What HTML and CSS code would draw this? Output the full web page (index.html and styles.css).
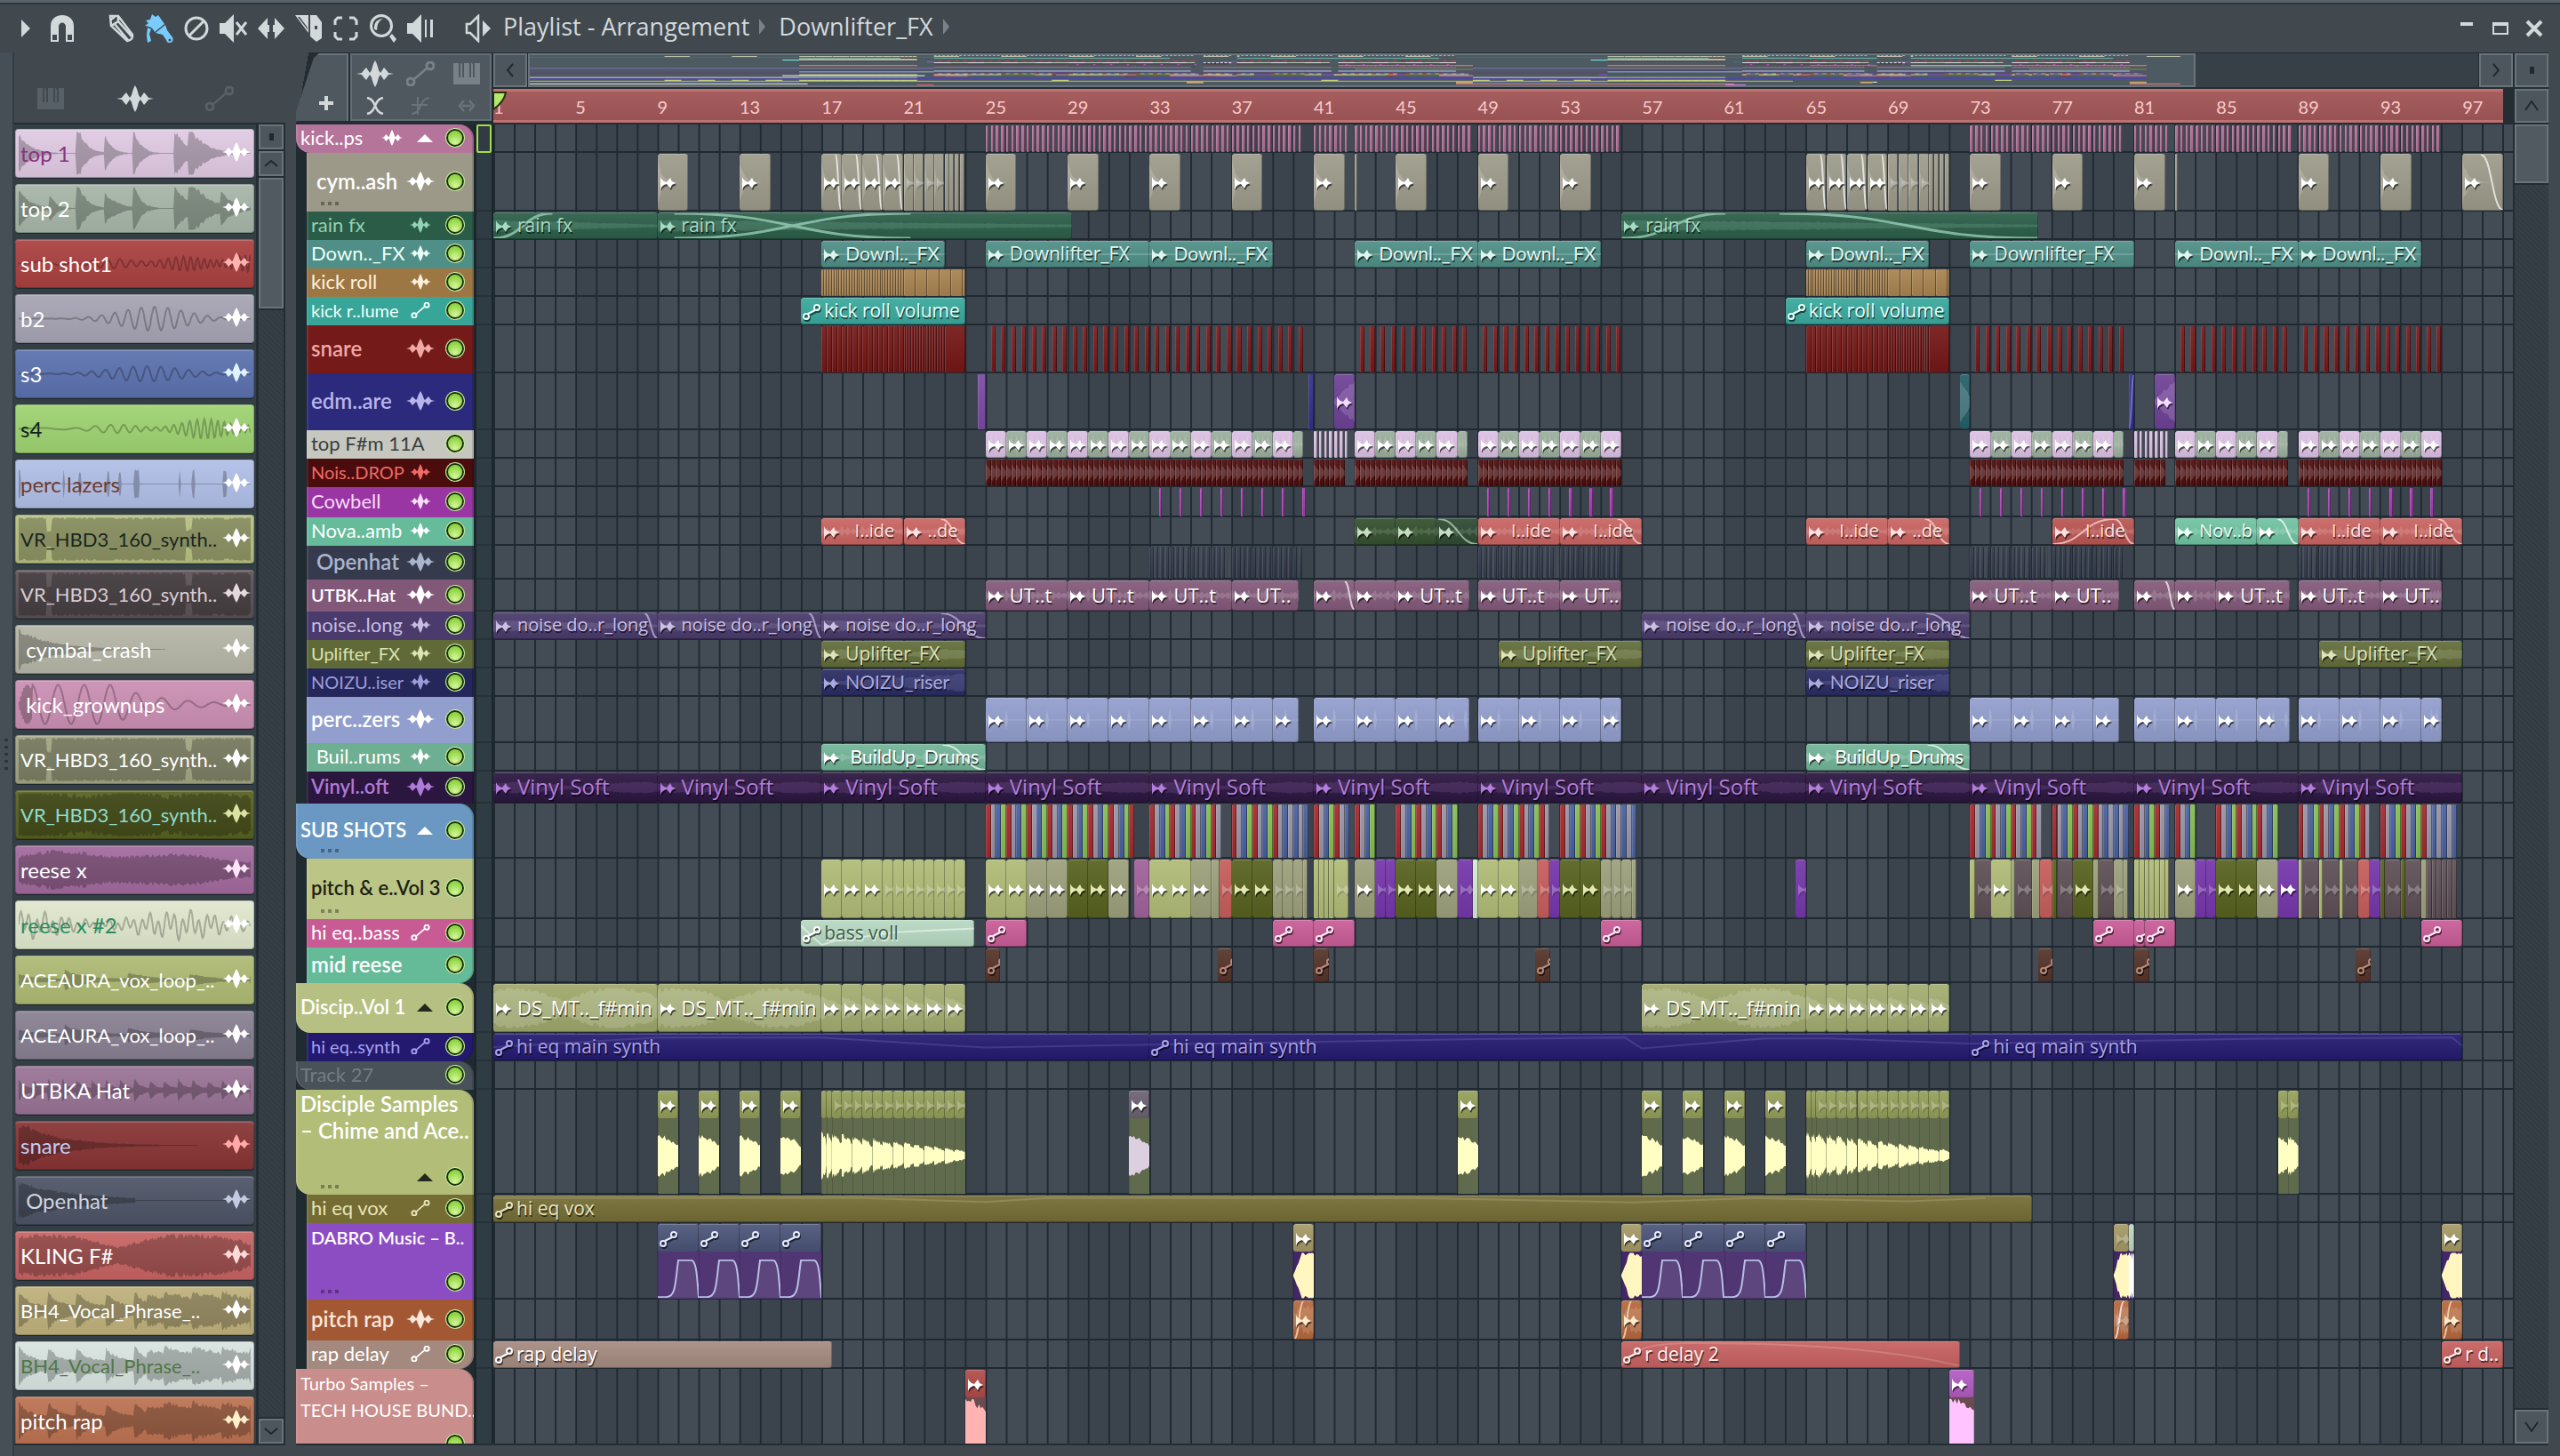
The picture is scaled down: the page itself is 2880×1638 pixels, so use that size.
FILE: index.html
```html
<!DOCTYPE html>
<html lang="en">
<head>
<meta charset="utf-8">
<title>Playlist - Arrangement</title>
<link rel="stylesheet" href="styles.css">
</head>
<body>
<svg class="defs" aria-hidden="true">
  <symbol id="i-wave" viewBox="0 0 42 30"><path d="M21 0C23 3 24 7 25 11L27 14L31 8Q34 11 36 14L42 15L36 16Q34 19 31 22L27 16L25 19C24 23 23 27 21 30C19 27 18 23 17 19L15 16L11 22Q8 19 6 16L0 15L6 14Q8 11 11 8L15 14L17 11C18 7 19 3 21 0Z"/></symbol>
  <symbol id="i-wave-s" viewBox="0 0 32 22"><path d="M16 0C18 3 19 6 20 9L21 10L25 6L28 10L32 11L28 12L25 16L21 12L20 13C19 16 18 19 16 22C14 19 13 16 12 13L11 12L7 16L4 12L0 11L4 10L7 6L11 10L12 9C13 6 14 3 16 0Z"/></symbol>
  <symbol id="i-auto" viewBox="0 0 32 28"><g fill="none" stroke="currentColor" stroke-width="3"><circle cx="5" cy="23" r="4"/><circle cx="27" cy="5" r="4"/><path d="M9 20L23 8" stroke-width="2.5"/></g></symbol>
  <symbol id="i-piano" viewBox="0 0 30 24"><path d="M0 0H6V16H8V0H9L10 2V16H12V0H18V16H20V0H21L22 2V16H24V0H30V24H0Z"/></symbol>
  <symbol id="i-clip" viewBox="0 0 17 14"><path d="M0 0Q2 5 7 6L11 1L13 5L17 7L13 9L11 13L7 8Q2 9 0 14Z"/></symbol>
  <symbol id="i-node" viewBox="0 0 20 18"><g fill="none" stroke="currentColor" stroke-width="2"><circle cx="4" cy="14" r="3"/><circle cx="16" cy="4" r="3"/><path d="M6 11L14 7"/></g></symbol>
</svg>

<header class="titlebar">
  <button class="tool menu" aria-label="Menu"><svg width="10" height="20" viewBox="0 0 10 20"><path d="M0 0L10 10L0 20Z"/></svg></button>
  <button class="tool magnet" aria-label="Snap"><svg width="26" height="30" viewBox="0 0 26 30"><path d="M0 30V12C0-4 26-4 26 12V30H17V13C17 7 9 7 9 13V30Z"/><path class="cut" d="M2 22H7V28H2ZM19 22H24V28H19Z"/></svg></button>
  <div class="tools" role="toolbar" aria-label="Edit tools">
    <button class="tool" aria-label="Draw"><svg width="30" height="32" viewBox="0 0 30 32"><path fill="none" stroke="currentColor" stroke-width="2.5" d="M2 2L11 2L27 23Q28 29 21 30L3 13ZM3 13L11 8V2M11 8L26 25M7 11L22 29M3 6L7 3"/></svg></button>
    <button class="tool on" aria-label="Paint"><svg width="32" height="32" viewBox="0 0 32 32"><path d="M8 0L12 3L15 1L22 11L11 20Q9 14 0 13L4 10L1 7L6 6ZM12 21L23 12L25 18L31 26Q33 30 29 32Q25 33 24 29L20 23ZM3 15L7 17L5 22L7 30L3 32L2 24Z"/><circle class="cut" cx="28" cy="29" r="1.5"/></svg></button>
    <button class="tool" aria-label="Delete"><svg width="28" height="30" viewBox="0 0 28 30"><g fill="none" stroke="currentColor" stroke-width="3"><circle cx="14" cy="15" r="12"/><path d="M6 23L22 7"/></g></svg></button>
    <button class="tool" aria-label="Mute"><svg width="32" height="32" viewBox="0 0 32 32"><path d="M0 10H6L16 0V32L6 22H0Z"/><path fill="none" stroke="currentColor" stroke-width="3" d="M19 9L30 23M30 9L19 23"/></svg></button>
    <button class="tool" aria-label="Slip"><svg width="30" height="26" viewBox="0 0 30 26"><path d="M0 13L11 1V9H13V17H11V25ZM30 13L19 1V9H17V17H19V25Z"/></svg></button>
    <button class="tool" aria-label="Slice"><svg width="30" height="30" viewBox="0 0 30 30"><path d="M0 0H15V20ZM17 0H24L30 8V26L24 30L17 24Z"/><path class="cut" d="M3 2L14 16V14L5 2ZM22 12H25V16H22Z"/></svg></button>
    <button class="tool" aria-label="Select"><svg width="28" height="28" viewBox="0 0 28 28"><path fill="none" stroke="currentColor" stroke-width="3" d="M2 10V5L5 2H10M18 2H23L26 5V10M26 18V23L23 26H18M10 26H5L2 23V18"/></svg></button>
    <button class="tool" aria-label="Zoom"><svg width="30" height="32" viewBox="0 0 30 32"><circle cx="13" cy="13" r="11.5" fill="none" stroke="currentColor" stroke-width="3"/><path d="M5 17Q4 6 15 5Q8 8 8 18ZM22 25L25 22L30 28L27 32Z"/></svg></button>
    <button class="tool" aria-label="Playback"><svg width="30" height="32" viewBox="0 0 30 32"><path d="M0 10H6L16 0V32L6 22H0ZM20 6H22V26H20ZM26 6H29V26H26Z"/></svg></button>
  </div>
  <button class="tool speaker" aria-label="Playlist options"><svg width="30" height="32" viewBox="0 0 30 32"><path fill="none" stroke="currentColor" stroke-width="2.5" d="M2 11H6L15 2V30L6 21H2Z"/><path d="M20 7L29 16L20 25Z"/></svg></button>
  <nav class="crumbs"><button>Playlist - Arrangement</button><i></i><button>Downlifter_FX</button><i></i></nav>
  <div class="window-buttons">
    <button aria-label="Minimize"><svg width="22" height="26" viewBox="0 0 22 26"><path d="M4 6H18V10H4Z"/></svg></button>
    <button aria-label="Maximize"><svg width="22" height="26" viewBox="0 0 22 26"><path fill-rule="evenodd" d="M2 6H20V20H2ZM4 10H18V18H4Z"/></svg></button>
    <button aria-label="Close"><svg width="22" height="26" viewBox="0 0 22 26"><path fill="none" stroke="currentColor" stroke-width="4" d="M3 5L19 21M19 5L3 21"/></svg></button>
  </div>
</header>

<main class="main">
  <div class="grip"><i></i><i></i><i></i><i></i><i></i></div>
  <aside class="picker">
    <div class="picker-tabs">
      <button class="dim" aria-label="Patterns"><svg width="30" height="24"><use href="#i-piano"/></svg></button>
      <button aria-label="Audio clips"><svg width="42" height="30"><use href="#i-wave"/></svg></button>
      <button class="dim" aria-label="Automation clips"><svg width="32" height="28"><use href="#i-auto"/></svg></button>
    </div>
    <div class="picker-body">
      <div class="picker-list" id="picker"></div>
      <div class="scroll">
        <button aria-label="Options"><b></b></button>
        <button aria-label="Scroll up"><svg width="16" height="8" viewBox="0 0 16 8"><path d="M1 7L8 1L15 7"/></svg></button>
        <div class="thumb long"></div>
        <div class="track"></div>
        <button aria-label="Scroll down"><svg width="16" height="8" viewBox="0 0 16 8"><path d="M1 1L8 7L15 1"/></svg></button>
      </div>
    </div>
  </aside>

  <section class="playlist">
    <div class="panel">
      <button class="plus" aria-label="Add track"><span></span></button>
      <div class="modes">
        <button aria-label="Audio"><svg width="42" height="30"><use href="#i-wave"/></svg></button>
        <button class="dim" aria-label="Automation"><svg width="32" height="28"><use href="#i-auto"/></svg></button>
        <button class="dim" aria-label="Patterns"><svg width="30" height="24"><use href="#i-piano"/></svg></button>
        <button aria-label="Crossfade"><svg width="20" height="20" viewBox="0 0 20 20"><path fill="none" stroke="currentColor" stroke-width="2.5" d="M1 1C12 3 8 17 19 19M19 1C8 3 12 17 1 19"/></svg></button>
        <button class="dim" aria-label="Curve"><svg width="20" height="20" viewBox="0 0 20 20"><path fill="none" stroke="currentColor" stroke-width="2" d="M0 9H18M7 0V20M0 19C12 19 8 2 20 1"/></svg></button>
        <button class="dim" aria-label="Stretch"><svg width="20" height="14" viewBox="0 0 20 14"><path fill="none" stroke="currentColor" stroke-width="2.5" d="M7 1L2 7L7 13M13 1L18 7L13 13M5 7H15"/></svg></button>
      </div>
    </div>
    <div class="timeline">
      <div class="overview">
        <button class="square" aria-label="Scroll left"><svg width="8" height="16" viewBox="0 0 8 16"><path d="M7 1L1 8L7 15"/></svg></button>
        <div class="overview-track"><div class="overview-view" id="overview"></div></div>
        <button class="square" aria-label="Scroll right"><svg width="8" height="16" viewBox="0 0 8 16"><path d="M1 1L7 8L1 15"/></svg></button>
      </div>
      <div class="ruler-row"><div class="ruler" id="ruler"><svg class="marker" width="16" height="22" viewBox="0 0 16 22"><path d="M0 1H14Q12 12 0 20Z"/></svg></div></div>
    </div>
    <div class="corner scroll">
      <button class="tall" aria-label="Options"><b></b></button>
      <button class="tall" aria-label="Scroll up"><svg width="16" height="12" viewBox="0 0 16 12"><path d="M1 11L8 1L15 11"/></svg></button>
    </div>
    <div class="heads" id="heads"></div>
    <div class="meters" id="meters"></div>
    <div class="lanes" id="lanes"></div>
    <div class="scroll">
      <div class="thumb short"></div>
      <div class="track"></div>
      <button class="tall" aria-label="Scroll down"><svg width="16" height="12" viewBox="0 0 16 12"><path d="M1 1L8 11L15 1"/></svg></button>
    </div>
  </section>
</main>
<script src="app.js"></script>
</body>
</html>
```
FILE: styles.css
```css
* { box-sizing: border-box; }
html, body { height: 100%; }
body {
  margin: 0;
  display: flex;
  flex-direction: column;
  overflow: hidden;
  background: #41494f;
  color: #d3d8db;
  font: 22px/28px Lato, "Open Sans", sans-serif;
}
button {
  display: flex;
  align-items: center;
  justify-content: center;
  padding: 0;
  border: 0;
  background: none;
  color: inherit;
  font: inherit;
}
svg { display: block; flex: none; fill: currentColor; }
.defs { position: absolute; width: 0; height: 0; }

/* title bar */
.titlebar {
  display: flex;
  align-items: center;
  height: 59px;
  flex: none;
  padding: 2px 10px 0 22px;
  border-top: 3px solid #59636a;
  box-shadow: inset 0 2px #2c363c;
}
.tool { height: 42px; width: 42px; }
.tool.menu { width: 14px; }
.tool.magnet { margin-left: 13px; }
.tool.on { color: #7accff; }
.tools { display: flex; margin-left: 25px; }
.tool.speaker { margin: 0 7px 0 23px; }
.cut { fill: #41494f; }
.crumbs { display: flex; align-items: center; font-family: "Open Sans", sans-serif; font-size: 27px; gap: 11px; flex: 1; padding-bottom: 4px; }
.crumbs i { border: 9px solid transparent; border-left: 7px solid #79828a; border-right-width: 0; margin-right: 4px; }
.window-buttons { display: flex; gap: 16px; margin-right: 8px; }

/* frame */
.main { flex: 1; min-height: 0; display: flex; padding: 0 13px 12px 0; }
.grip {
  width: 16px;
  flex: none;
  margin-bottom: -12px;
  background: #464f56;
  border-right: 2px solid #333c43;
  display: flex;
  flex-direction: column;
  justify-content: center;
  align-items: center;
  gap: 5px;
}
.grip i { width: 4px; height: 3px; background: #2c353b; }

/* clip picker */
.picker { width: 305px; flex: none; display: flex; flex-direction: column; margin-right: 12px; }
.picker-tabs { display: flex; height: 79px; padding: 24px 58px 0 26px; justify-content: space-between; align-items: center; }
.dim { color: #566066; }
.picker-body { flex: 1; min-height: 0; display: flex; background: #333e45; border: solid #232d33; border-width: 2px 2px 2px 0; }
.picker-list { flex: 1; overflow: hidden; padding: 5px 2px 0 1px; display: flex; flex-direction: column; gap: 7px; border-right: 3px solid #232d33; }
.sample {
  position: relative;
  flex: none;
  height: 55px;
  padding: 0 4px 0 6px;
  justify-content: space-between;
  border-radius: 4px;
  background: linear-gradient(#ffffff14, #00000010) var(--c);
  box-shadow: inset 0 0 0 1px #0003, inset 0 2px #fff3, 0 1px #1c252b;
  color: var(--t);
  font-size: 24px;
  white-space: pre;
}
.sample.long { font-size: 22px; }
.sample span { position: relative; }
.sample > svg:last-child { position: relative; color: var(--i); margin-top: -4px; }
.sample .wave { position: absolute; left: 4px; top: 3px; width: calc(100% - 8px); height: 49px; color: #000; opacity: .24; }

/* scroll bars */
.scroll { display: flex; flex-direction: column; gap: 2px; width: 28px; background: #232d33; }
.scroll button, .square {
  height: 28px;
  background: #4d565d;
  border: 2px solid #69737a;
  color: #1f292f;
}
.scroll button svg, .square svg { fill: none; stroke: currentColor; stroke-width: 2; }
.scroll .tall { height: 38px; }
.scroll b { width: 5px; height: 8px; background: #1f292f; }
.thumb { background: #515a61; border: 2px solid #69737a; }
.thumb.long { height: 147px; }
.thumb.short { height: 66px; }
.track { flex: 1; background: repeating-linear-gradient(45deg, #363f46 0 2px, #323b41 2px 4px); }

/* playlist */
.playlist {
  flex: 1;
  min-width: 0;
  display: grid;
  grid-template-columns: 200px 22px minmax(0, 1fr) 40px;
  grid-template-rows: 81px minmax(0, 1fr);
  border-bottom: 2px solid #232d33;
}
.panel { grid-column: 1 / 3; display: flex; gap: 2px; padding: 1px 2px 2px 0; background: linear-gradient(100deg, #41494f 14px, #232d33 14px); border-bottom: 2px solid #232d33; }
.plus { width: 59px; padding: 36px 0 0 8px; background: #4f585f; clip-path: polygon(20px 5px, 26px 0, 100% 0, 100% 100%, 0 100%, 0 86%); box-shadow: inset -2px 2px #69737a; }
.plus span { width: 16px; height: 16px; background: linear-gradient(currentColor, currentColor) center / 100% 4px no-repeat, linear-gradient(currentColor, currentColor) center / 4px 100% no-repeat; }
.modes { flex: 1; display: grid; grid-template-columns: repeat(3, 1fr); background: #4f585f; border: 2px solid #636d74; }
.modes .dim { color: #788187; }
.modes .dim:nth-child(n+5) { color: #69737a; }

.timeline { display: flex; flex-direction: column; min-width: 0; background: #232d33; }
.overview { display: flex; height: 41px; padding: 1px 0 2px; gap: 1px; }
.square { width: 38px; height: 38px; flex: none; }
.overview-track { flex: 1; background: #373f47; }
.overview-view { width: 85.5%; height: 38px; background: #4d5a61; border: 2px solid #69737a; }
.overview-view svg { width: 100%; height: 34px; filter: brightness(1.3); }
.ruler-row { flex: 1; padding-bottom: 2px; }
.ruler {
  position: relative;
  width: calc(100% * 98 / 98.46);
  height: 38px;
  background: linear-gradient(#a55d5e, #995253);
  border: solid #bf7270;
  border-width: 3px 0;
  color: #f9caca;
  font-size: 20px;
  line-height: 34px;
}
.ruler span { position: absolute; }
.marker { position: absolute; left: 0; top: 0; z-index: 1; fill: #b4e86a; stroke: #24330f; stroke-width: 2; }
.corner { padding: 1px 0 2px 2px; }
.playlist > .scroll { width: 40px; padding-left: 2px; border-right: 0; }

/* track headers */
.heads { overflow: hidden; background: #1f2a31; }
.head {
  position: relative;
  display: flex;
  height: var(--h);
  margin-left: 12px;
  padding: 0 10px 2px 5px;
  align-items: center;
  background: var(--c);
  box-shadow: inset 2px 0 #ffffff18, inset -2px 0 #0002;
  color: var(--t);
  white-space: pre;
}
.head.group { margin-left: 0; border-radius: 0 16px 0 16px; }
.head.last { border-radius: 0 0 16px 0; }
.head.big { font-size: 24px; font-weight: 600; }
.head.mid { font-size: 22px; font-weight: 600; }
.head.bold { font-size: 20px; font-weight: 600; }
.head.small { font-size: 20px; }
.head .name { flex: 1; min-width: 0; }
.head .ico { width: 32px; display: flex; justify-content: center; margin-right: 12px; }
.head .up { border: 9px solid transparent; border-top: 0; border-bottom-color: currentColor; margin-right: 14px; }
.head.tall { align-items: flex-end; justify-content: flex-end; padding-bottom: 9px; }
.head.tall .name { position: absolute; top: 1px; left: 5px; line-height: 30px; }
.head.tall .up { margin-bottom: 6px; }
.head .dark { border-bottom-color: #23291a; }
.dots { position: absolute; left: 16px; bottom: 7px; width: 20px; height: 4px; background: repeating-linear-gradient(90deg, #0005 0 4px, transparent 4px 8px); }
.group .dots { left: 28px; }
.led {
  appearance: none;
  width: 22px;
  height: 22px;
  margin: 0;
  flex: none;
  border-radius: 50%;
  border: 1px solid #ffffff70;
  background: radial-gradient(circle at 50% 75%, #d6f59a, #8fd544 60%);
  box-shadow: inset 0 0 0 2px #1c3012;
}
.meters { overflow: hidden; background: #2f3c43; border: solid #1c272d; border-width: 0 2px 0 3px; }
.meters i { display: block; height: var(--h); border-bottom: 2px solid #263138; }
.meters i:first-child { border: 2px solid #a8dc4a; border-radius: 2px; }

/* arrangement */
.lanes {
  position: relative;
  overflow: hidden;
  background:
    linear-gradient(90deg, #1f2932 2px, transparent 2px) 0 0 / calc(100% / 98.46) 100%,
    linear-gradient(90deg, #434b55 50%, #3b444d 50%) 0 0 / calc(100% * 8 / 98.46) 100%;
}
.lane { position: relative; height: var(--h); border-bottom: 2px solid #1f2932; }
.clip {
  position: absolute;
  top: 1px;
  bottom: -1px;
  overflow: hidden;
  display: flex;
  align-items: center;
  border-radius: 3px;
  background: linear-gradient(#ffffff12, #00000014) var(--c);
  box-shadow: inset -1px 0 #0004, inset 0 1px #fff3, inset 0 -1px #0004;
  color: var(--t, #fff);
  font: 21px/26px "Open Sans", sans-serif;
  white-space: pre;
}
.clip.tight { font: 21px/26px Lato, sans-serif; }
.clip.snug { font-size: 20px; }
.clip.mid { font-size: 22px; }
.clip.large { font-size: 24px; }
.clip.thin { border-radius: 1px; box-shadow: inset 1px 0 #fff2, inset -1px 0 #0006; }
.clip.dull { opacity: .75; }
.clip .icon { position: relative; margin: 2px 7px 0 3px; filter: drop-shadow(1px 2px #0009); }
.clip .icon.node { margin: 2px 4px 0 2px; }
.clip .faint { opacity: .25; }
.clip span { position: relative; text-shadow: 1px 2px #0009; margin-top: -3px; }
.clip.pale span { text-shadow: 1px 2px #fff9; }
.clip .wave, .clip .curve { position: absolute; left: 0; top: 4px; width: 100%; height: calc(100% - 8px); }
.clip .wave { opacity: .16; color: var(--t, #fff); }
.clip .curve { fill: none; stroke: var(--t, #fff); stroke-width: 2; opacity: .7; top: 1px; height: calc(100% - 2px); }
.clip.auto .curve { opacity: .18; }
.clip.pale .curve { stroke: #fff; opacity: .5; }
.clip.pale .icon { color: #fff; }
.clip.wide .curve { stroke-width: 3; }
.clip.faintline .curve { stroke-width: 1; opacity: .4; }
.clip.split { display: block; background: var(--b); box-shadow: inset 1px 0 #0002; border-radius: 0; }
.clip.split .cap { display: flex; align-items: center; height: 31px; border-radius: 3px; background: linear-gradient(#ffffff14, #00000018) var(--c); box-shadow: inset -1px 0 #0004, inset 0 1px #fff3; overflow: hidden; }
.clip.split .wave { top: 32px; height: calc(100% - 32px); color: var(--w); opacity: 1; }
.clip.split .curve { top: 40px; height: calc(100% - 41px); stroke: #b7bfe6; fill: #ffffff14; opacity: 1; }
```
FILE: app.js
```js
const NS = 'http://www.w3.org/2000/svg';
const BARS = 98.46;

function el(tag, cls, parent) {
  const e = document.createElement(tag);
  if (cls) e.className = cls;
  if (parent) parent.appendChild(e);
  return e;
}
function svg(markup, cls, box, parent) {
  const s = document.createElementNS(NS, 'svg');
  s.setAttribute('class', cls);
  s.setAttribute('viewBox', box);
  s.setAttribute('preserveAspectRatio', 'none');
  s.innerHTML = markup;
  parent.appendChild(s);
  return s;
}
function icon(id, w, h, cls, parent) {
  const s = document.createElementNS(NS, 'svg');
  s.setAttribute('width', w);
  s.setAttribute('height', h);
  if (cls) s.setAttribute('class', cls);
  s.innerHTML = `<use href="#${id}"/>`;
  parent.appendChild(s);
}
let seed = 7;
const rnd = () => (seed = (seed * 16807) % 2147483647) / 2147483647;

/* waveform shapes: t runs 0..1, result is the amplitude */
const hits = (list, t) => Math.max(.02, ...list.map(([p, d, a]) => t < p ? 0 : a * Math.exp(-(t - p) / d)));
const env = {
  beat: t => hits([[0, .05, 1], [.25, .035, 1.6], [.37, .03, 1], [.49, .03, 1.5], [.67, .05, 1.3], [.73, .06, 1.6]], t),
  beat2: t => hits([[0, .05, 1], [.13, .03, .8], [.25, .035, 1.6], [.37, .05, .9], [.49, .03, 1.5], [.67, .05, 1.3], [.73, .07, 1.8], [.87, .06, .9]], t),
  perc: t => [[0, .01], [.19, .01], [.26, .01], [.38, .01], [.43, .01], [.5, .02], [.69, .01], [.75, .01], [.88, .02]].some(([p, w]) => t >= p && t < p + w) ? .7 : .02,
  flat: t => 1.1 + .15 * Math.sin(t * 17),
  burst: t => 1 - .45 * t * t,
  flatcut: t => t > .12 && t < .14 ? .4 : t > .72 && t < .75 ? .5 : 1.2,
  crash: t => Math.exp(-t * 7),
  snare: t => t < .05 ? 1 : Math.exp(-(t - .03) * 6),
  hat: t => t > .5 ? .02 : Math.exp(-t * 4) * .9,
  reese: t => .7 + .3 * Math.sin(t * 8) * Math.cos(t * 3),
  swell: t => .4 + .7 * Math.abs(Math.sin(t * 5 + 1)),
  pulses: t => .1 + .5 * Math.exp(-((t * 16) % 1) * 3),
  loop: t => .06 + .5 * Math.exp(-((t * 6 + .4) % 1.6) * 2) * (1 - t * .6),
  vocal: t => .25 + .75 * Math.exp(-((t * 8) % 1) * (t > .55 ? .6 : 3)),
  rise: t => .1 + .9 * t,
  flare: t => Math.min(1.1, .05 + t * 2.6),
  fall: t => 1 - .75 * t,
  block: t => 1.2 - .5 * t,
  low: t => .35 + .2 * Math.sin(t * 9),
  soft: t => .5 * (1 - t) + .15
};
function wavePath(kind, n) {
  let up = '', down = '';
  for (let i = 0; i <= n; i++) {
    const t = i / n;
    const a = Math.min(1, env[kind](t) * (.75 + .25 * rnd())) * 49;
    up += `L${(t * 100).toFixed(1)} ${(50 - a).toFixed(0)}`;
    down = `L${(t * 100).toFixed(1)} ${(50 + a).toFixed(0)}` + down;
  }
  return `<path d="M0 50${up}${down}Z"/>`;
}
const lines = {
  sub: t => Math.sin(t * t * 140) * (.08 + .35 * t) * (.7 + .3 * Math.sin(t * 20)),
  b2: t => Math.sin(t * 110) * .55 * Math.exp(-Math.pow((t - .58) * 5, 2)),
  s3: t => Math.sin(t * 105) * .35 * Math.exp(-Math.pow((t - .55) * 4.5, 2)),
  s4: t => Math.sin(t * t * 130) * (.05 + .5 * Math.pow(t, 1.5)) * (.7 + .4 * Math.cos(t * 16)),
  kick: t => t < .06 ? Math.sin(t * 900) * .9 : Math.cos((t - .17) * 56) * .9 * Math.min(1, Math.exp(-(t - .4) * 5)),
  saw: t => (Math.sin(t * 180) * .5 + Math.sin(t * 70) * .3) * (.6 + .3 * Math.cos(t * 9))
};
function linePath(kind) {
  let d = '';
  for (let i = 0; i <= 300; i++) {
    const t = i / 300;
    d += `${i ? 'L' : 'M'}${(t * 100).toFixed(1)} ${(50 - lines[kind](t) * 50).toFixed(1)}`;
  }
  return `<path d="${d}" fill="none" stroke="currentColor" stroke-width="2" vector-effect="non-scaling-stroke"/>`;
}

/* ---- clip picker ---- */
const samples = [
  ['top 1', '#dfc9e2', '#86347e', '#fff', 'beat'], ['top 2', '#a5b5a6', '#fff', '#fff', 'beat2'],
  ['sub shot1', '#a93f3f', '#fff', '#ffb4b0', 'sub'], ['b2', '#a5a3b2', '#fff', '#fff', 'b2'],
  ['s3', '#5a70ad', '#fff', '#dff4ff', 's3'], ['s4', '#9dd270', '#10221c', '#fff', 's4'],
  ['perc lazers', '#b0bee6', '#703c30', '#fff', 'perc'], ['VR_HBD3_160_synth..', '#b6bf80', '#1a2620', '#fff', 'flatcut'],
  ['VR_HBD3_160_synth..', '#5b5155', '#d8ccd2', '#e4dade', 'flatcut'], [' cymbal_crash', '#b4b5a5', '#fff', '#fff', 'crash'],
  [' kick_grownups', '#ca8eb2', '#fff', '#fff', 'kick'], ['VR_HBD3_160_synth..', '#a0a581', '#fff', '#fff', 'flatcut'],
  ['VR_HBD3_160_synth..', '#56601f', '#8fdccc', '#dce2a4', 'flat'], ['reese x', '#a1699c', '#fff', '#ffe4fc', 'reese'],
  ['reese x #2', '#dfe7cc', '#2c8c60', '#fff', 'saw'], ['ACEAURA_vox_loop_..', '#adb973', '#fff', '#fff', 'loop'],
  ['ACEAURA_vox_loop_..', '#877f90', '#fff', '#fff', 'loop'], ['UTBKA Hat', '#987294', '#fff', '#fff', 'pulses'],
  ['snare', '#873333', '#c4ccf4', '#ffaaaa', 'snare'], [' Openhat', '#4c5365', '#cfd4e0', '#c2cbe2', 'hat'],
  ['KLING F#', '#c66262', '#fff', '#ffd8d8', 'swell'], ['BH4_Vocal_Phrase_..', '#beb07b', '#fff', '#fff', 'vocal'],
  ['BH4_Vocal_Phrase_..', '#d8e3df', '#4e7846', '#fff', 'vocal'], ['pitch rap', '#bb7150', '#fff', '#fff0cc', 'vocal']
];
const picker = document.getElementById('picker');
samples.forEach(([name, c, t, i, w]) => {
  const b = el('button', 'sample' + (name.length > 16 ? ' long' : ''), picker);
  b.style.cssText = `--c:${c};--t:${t};--i:${i}`;
  svg(lines[w] ? linePath(w) : wavePath(w, 180), 'wave', '0 0 100 100', b);
  el('span', '', b).textContent = name;
  icon('i-wave-s', 32, 22, '', b);
});

/* ---- tracks: name, height, colour, text, icon, flags ---- */
const tracks = [
  ['kick..ps', 32, '#b5749a', '#fff', 'w', 'group up'], [' cym..ash', 66, '#9c9989', '#fff', 'W', 'big dots'],
  ['rain fx', 32, '#2a5c47', '#94d2b4', 'w', ''], ['Down.._FX', 32, '#4f8f87', '#e8fff8', 'w', ''],
  ['kick roll', 32, '#9d7743', '#fff0dc', 'w', ''], ['kick r..lume', 32, '#37a598', '#f0fffc', 'a', 'small'],
  ['snare', 54, '#741b1a', '#f0a8a4', 'W', 'big'], ['edm..are', 64, '#2b2a7c', '#b8b4ea', 'W', 'big'],
  ['top F#m 11A', 32, '#c6c7bf', '#3a3e3e', '', ''], ['Nois..DROP', 32, '#4a0c0c', '#f06a66', 'w', 'small'],
  ['Cowbell', 34, '#9a35a4', '#f8dcfa', 'w', ''], ['Nova..amb', 32, '#66bb9a', '#fff', 'w', ''],
  [' Openhat', 38, '#353b4c', '#aab4cc', 'W', 'big'], ['UTBK..Hat', 36, '#825878', '#fff', 'W', 'bold'],
  ['noise..long', 32, '#4a3b6c', '#c8bce2', 'w', ''], ['Uplifter_FX', 32, '#5f6a38', '#dce2b0', 'w', 'small'],
  ['NOIZU..iser', 32, '#25265a', '#9c9cd8', 'w', 'small'], ['perc..zers', 52, '#929ecd', '#fff', 'W', 'big'],
  [' Buil..rums', 32, '#6eae93', '#fff', 'w', ''], ['Vinyl..oft', 36, '#2a163e', '#b07ad8', 'W', 'mid'],
  ['SUB SHOTS', 62, '#6b98c2', '#fff', '', 'group up dots mid'], ['pitch & e..Vol 3', 68, '#bac586', '#1c2010', '', 'dots mid'],
  ['hi eq..bass', 32, '#c85a94', '#fff', 'a', ''], ['mid reese', 40, '#65ba98', '#fff', '', 'last big'],
  ['Discip..Vol 1', 56, '#b7c083', '#fff', '', 'group up dark mid'], ['hi eq..synth', 32, '#231a70', '#a8a0ee', 'a', 'last small'],
  ['Track 27', 32, '#4a5259', '#737c83', '', 'group'], ['Disciple Samples\n– Chime and Ace..', 118, '#b2bd78', '#fff', '', 'group up dark dots big tall'],
  ['hi eq vox', 32, '#746c33', '#e8e4b8', 'a', ''], ['DABRO Music – B..', 86, '#8c4cc2', '#fff', '', 'dots bold tall'],
  ['pitch rap', 46, '#a35833', '#f8e6da', 'W', 'big'], ['rap delay', 32, '#a48a7e', '#fff', 'a', 'last'],
  ['Turbo Samples –\nTECH HOUSE BUND..', 104, '#c98d8b', '#fff', '', 'group small tall']
];
const heads = document.getElementById('heads');
const meters = document.getElementById('meters');
const lanesEl = document.getElementById('lanes');
const laneOf = tracks.map(([name, h, c, t, ic, flags]) => {
  const f = flags.split(' ');
  const head = el('div', 'head ' + f.filter(x => ['group', 'last', 'big', 'mid', 'bold', 'small', 'tall'].includes(x)).join(' '), heads);
  head.style.cssText = `--h:${h}px;--c:${c};--t:${t}`;
  el('span', 'name', head).textContent = name;
  if (ic) {
    const box = el('span', 'ico', head);
    if (ic === 'W') icon('i-wave-s', 32, 22, '', box);
    if (ic === 'w') svg('<use href="#i-wave-s" width="32" height="22"/>', 'wave-mini', '0 0 32 22', box).setAttribute('style', 'width:24px;height:18px');
    if (ic === 'a') icon('i-auto', 24, 18, '', box);
  }
  if (f.includes('up')) el('i', 'up' + (f.includes('dark') ? ' dark' : ''), head);
  if (f.includes('dots')) el('i', 'dots', head);
  const led = el('input', 'led', head);
  led.type = 'checkbox';
  led.checked = true;
  led.setAttribute('aria-label', 'Enable ' + name.trim());
  el('i', '', meters).style.setProperty('--h', h + 'px');
  const lane = el('div', 'lane', lanesEl);
  lane.style.setProperty('--h', h + 'px');
  return lane;
});

/* ---- clips ---- */
const mini = [];
function clip(row, start, len, c, o = {}) {
  const cls = ['clip', o.cls || ''];
  if (len < .5 || o.thin) cls.push('thin');
  if (o.body) cls.push('split');
  else if (o.icon === 'a') cls.push('auto');
  const d = el('div', cls.filter(Boolean).join(' '), laneOf[row]);
  d.style.cssText = `left:${((start - 1) / BARS * 100).toFixed(3)}%;width:${(len / BARS * 100).toFixed(3)}%;--c:${c}` + (o.t ? `;--t:${o.t}` : '') + (o.body ? `;--b:${o.body};--w:${o.wc}` : '');
  mini.push(`<rect x="${start - 1}" y="${row}" width="${len}" height=".9" fill="${o.m || c}"/>`);
  const host = o.body ? el('div', 'cap', d) : d;
  if (o.wave) svg(wavePath(o.wave, Math.max(12, Math.round(len * 11))), 'wave', '0 0 100 100', d);
  if (o.curve) svg(o.curve.map(p => `<path vector-effect="non-scaling-stroke" d="${p}"/>`).join(''), 'curve', '0 0 100 100', d);
  if (o.icon === 'w' || o.icon === 'f') icon('i-clip', 17, 14, 'icon' + (o.icon === 'f' ? ' faint' : ''), host);
  if (o.icon === 'a') icon('i-node', 20, 18, 'icon node', host);
  if (o.label) el('span', '', host).textContent = o.label;
}
const run = (row, a, b, step, w, c, o) => { for (let x = a; x < b - .01; x += step) clip(row, x, Math.min(w, b - x), c, o); };
const out = (a, b = 100) => `M${a} 0C${(a + b) / 2} 0 ${(a + b) / 2} 100 ${b} 100`;
const inn = (a, b) => `M${a} 100C${(a + b) / 2} 100 ${(a + b) / 2} 0 ${b} 0`;

[[25, 40.5], [41, 42.7], [43, 48.7], [49, 56], [73, 80.5], [81, 82.7], [83, 88.7], [89, 96]].forEach(([a, b]) => {
  run(0, a, b, .25, .15, '#b06c95');
  run(9, a, Math.floor(b * 2) / 2, .25, .25, '#4e0d0d', { wave: 'fall' });
});

const CY = '#9d9b8a';
[9, 13, 25, 29, 33, 37, 41, 45, 49, 53, 73, 77, 81, 89, 93].forEach(b => clip(1, b, 1.5, CY, { icon: 'w', wave: 'crash' }));
[17, 65].forEach(b => {
  run(1, b, b + 4, 1, .97, CY, { icon: 'w', wave: 'crash', curve: [out(70)] });
  run(1, b + 4, b + 6, .5, .48, CY, { icon: 'f', wave: 'crash' });
  run(1, b + 6, b + 7, .25, .22, CY);
});
clip(1, 43, .14, CY); clip(1, 83, .14, CY);
clip(1, 97, 2, CY, { icon: 'w', wave: 'crash', curve: [out(45)] });

const RA = { icon: 'w', t: '#a4dcc2', label: 'rain fx', cls: 'wide' };
clip(2, 1, 8, '#2b5e49', { ...RA, wave: 'soft', curve: [inn(0, 36)] });
clip(2, 9, 20.2, '#2b5e49', { ...RA, wave: 'soft', curve: [out(4, 61), inn(4, 61)] });
clip(2, 56, 20.3, '#2b5e49', { ...RA, wave: 'soft', curve: [inn(0, 25), out(38)] });

[[17, 6], [25, 8], [33, 6], [43, 6], [49, 6], [65, 6], [73, 8], [83, 6], [89, 6]].forEach(([b, l]) =>
  clip(3, b, l, '#4f8f87', { icon: 'w', t: '#dff5ee', cls: (l === 8 ? '' : 'tight ') + 'faintline', label: l === 8 ? 'Downlifter_FX' : 'Downl.._FX', curve: ['M0 50H100'] }));
[17, 65].forEach(b => {
  run(4, b, b + 4, .125, .125, '#a88350'); run(4, b + 4, b + 7, .58, .58, '#a88350', { thin: 1 });
  clip(5, b - 1, 8, '#3ba99d', { icon: 'a', t: '#e6fffa', label: 'kick roll volume', m: '#5cd0c4' });
  run(6, b, b + 4, .25, .25, '#741716'); run(6, b + 4, b + 6, .125, .125, '#741716'); clip(6, b + 6, 1, '#741716', { thin: 1 });
});
[[25.25, 40.5], [43.25, 48.5], [49.25, 56], [73.25, 80.5], [83.25, 88.5], [89.25, 96]].forEach(([a, b]) => run(6, a, b, .5, .22, '#76191a', { m: '#a32c2c' }));
[36.75, 52.75, 76.75, 92.75].forEach(b => clip(6, b, .25, '#76191a'));

clip(7, 24.6, .4, '#7a4aa4'); clip(7, 40.75, .25, '#32308c'); clip(7, 72.5, .5, '#256068', { wave: 'fall' }); clip(7, 80.75, .25, '#32308c', { t: '#8a88d8', curve: [inn(0, 100)] });
[42, 82].forEach(b => clip(7, b, 1, '#6d4296', { icon: 'w', t: '#f4dcff', wave: 'rise' }));

const PK = '#dcc0e3', GN = '#9baf9d';
[[25, 40], [43, 48], [49, 56], [73, 80], [83, 88], [89, 96]].forEach(([a, b]) => {
  for (let x = a; x < b; x++) clip(8, x, 1, (x - a) % 2 ? GN : PK, { icon: 'w', wave: 'beat' });
});
[40, 48, 80, 88].forEach(b => clip(8, b, .5, GN, { wave: 'beat' }));
[41, 81].forEach(b => run(8, b, b + 1.7, .25, .16, PK));

[[33.45, 41], [49.45, 56], [73.45, 81], [89.45, 96]].forEach(([a, b]) => run(10, a, b, 1, .14, '#a63ab0'));

const RD = { icon: 'w', t: '#ffe0de', wave: 'pulses', cls: 'snug' };
const IDE = '  I..ide';
[17, 65].forEach(b => { clip(11, b, 4, '#c96462', { ...RD, label: IDE }); clip(11, b + 4, 3, '#c96462', { ...RD, label: '..de', curve: [out(60)] }); });
[49, 89].forEach(b => { clip(11, b, 4, '#c96462', { ...RD, label: IDE }); clip(11, b + 4, 4, '#c96462', { ...RD, label: IDE, curve: [out(70)] }); });
clip(11, 77, 4, '#b95553', { ...RD, label: IDE, curve: [inn(0, 75), out(75)] });
const DG = { icon: 'w', t: '#c4dcc0', wave: 'pulses' };
clip(11, 43, 2, '#35502f', DG); clip(11, 45, 2, '#35502f', DG); clip(11, 47, 2, '#2f4a34', { ...DG, curve: [out(5)] });
clip(11, 83, 4, '#70c4a2', { icon: 'w', t: '#e8fff4', wave: 'pulses', label: 'Nov..b', cls: 'snug' }); clip(11, 87, 2, '#70c4a2', { icon: 'w', wave: 'pulses', curve: [out(50)] });

[[33, 36.8], [37, 40.5], [49, 52.8], [53, 56], [73, 76.8], [77, 80.5], [89, 92.8], [93, 96]].forEach(([a, b]) => run(12, a, b, .25, .18, '#2f3648', { cls: 'dull' }));

[[25, 4, 'UT..t'], [29, 4, 'UT..t'], [33, 4, 'UT..t'], [37, 3.25, 'UT..'], [41, 2, ''], [43, 2, ''], [45, 3.6, 'UT..t'], [49, 4, 'UT..t'], [53, 3, 'UT..'],
 [73, 4, 'UT..t'], [77, 3.25, 'UT..'], [81, 2, ''], [83, 2, ''], [85, 3.6, 'UT..t'], [89, 4, 'UT..t'], [93, 3, 'UT..']].forEach(([b, l, s]) =>
  clip(13, b, l, '#835a7a', { icon: 'w', wave: 'pulses', label: s, cls: 'mid', curve: b === 41 || b === 81 ? [out(75)] : null }));
[1, 9, 17, 57, 65].forEach(b => clip(14, b, 8, '#4a3b6c', { icon: 'w', t: '#cbbfe6', wave: 'soft', label: 'noise do..r_long', cls: 'snug', curve: b % 48 === 17 ? [out(73)] : [out(92)], m: '#66548f' }));
[17, 50, 65, 90].forEach(b => clip(15, b, 7, '#626d3a', { icon: 'w', t: '#dfe3b8', wave: 'low', label: 'Uplifter_FX' }));
[17, 65].forEach(b => {
  clip(16, b, 7, '#2a2b62', { icon: 'w', t: '#a9a9e0', wave: 'rise', label: 'NOIZU_riser', cls: 'tight' });
  clip(18, b, 8, '#72b598', { icon: 'w', wave: 'pulses', label: ' BuildUp_Drums', cls: 'tight', curve: [out(74)] });
});
[[25, 39, 1.25], [41, 47, 1.6], [49, 55, 1], [73, 79, 1.25], [81, 87, 1.6], [89, 95, 1]].forEach(([a, b, l]) => {
  for (let x = a; x <= b; x += 2) clip(17, x, x === b ? l : 2, '#929ecd', { icon: 'w', wave: 'perc' });
});
for (let b = 1; b < 97; b += 8) clip(19, b, 8, '#2b163f', { icon: 'w', t: '#b37ddb', wave: 'low', label: 'Vinyl Soft', cls: 'large', m: '#4c2f66' });

const S = ['#a32a2e', '#9694a6', '#48609f', '#86bc52'];
[[25, 29], [33, 14], [37, 15, 1], [41, 7], [43, 4], [45, 12], [49, 14], [53, 15, 1], [73, 14], [77, 15, 1], [81, 7], [83, 4], [85, 12], [89, 14], [93, 15, 1]].forEach(([a, n, end]) => {
  for (let i = 0; i < n; i++) clip(20, a + i / 4, .25, end && i > 10 ? S[i % 2 ? 1 : 2] : S[i % 4]);
});

const P = { L: '#b0bb77', G: '#9da07b', O: '#57621f', P: '#7536ab', M: '#a0629a', R: '#c65e5c', K: '#5d5056', W: '#d4ead0' };
const seq = list => list.split(' ').forEach(s => {
  const [, k, a, l] = s.match(/(\w)([\d.]+):([\d.]+)/);
  clip(21, +a, +l, P[k], { icon: +l >= 1 ? 'w' : +l >= .5 ? 'f' : '', t: k === 'O' ? '#e4e8b0' : '#fff' });
});
seq('L17:1 L18:1 L19:1 L20:.5 L20.5:.5 L21:.5 L21.5:.5 L22:.5 L22.5:.5 L23:.5 L23.5:.5 L25:1 L26:1 G27:1 G28:1 O29:1 O30:1 G31:1 M32.25:.75 L33:1 L34:1 G35:1 G36:.4 R36.4:.6 O37:1 O38:1 G39:.5 G39.5:.5 G40:.5 G40.5:.2');
seq('L41:.25 L41.25:.25 L41.5:.25 L41.75:.25 L42:.7 G43:1 P44:.5 P44.5:.5 O45:1 O46:1 G47:1 P48:.75 W48.75:.25 L49:1 L50:1 G51:.9 R51.9:.6 P52.5:.5 O53:1 O54:1 G55:.5 G55.5:.5 G56:.5 G56.5:.25 P64.5:.5');
seq('L73:.25 K73.25:.8 L74:1 G75:.2 K75.2:.8 G76:.4 R76.4:.6 O77:.25 K77.25:.75 O78:1 G79:.25 K79.25:.75 G80:.5 G80.5:.2 L81:.25 L81.25:.25 L81.5:.25 L81.75:.25 L82:.25 L82.25:.25 L82.5:.2 G83:1 P84:.5 P84.5:.5 O85:1 O86:1 G87:1 P88:1');
seq('L89:.2 K89.2:.8 L90:.2 K90.2:.8 L91:.2 K91.2:.7 R91.9:.6 P92.5:.5 O93:.2 K93.2:.8 O94:.2 K94.2:.8 G95:.25 K95.25:.25 K95.5:.25 K95.75:.25 K96:.25 K96.25:.25 K96.5:.25');

clip(22, 16, 8.45, '#b7d9c2', { icon: 'a', t: '#3e6048', label: 'bass voll', cls: 'pale', curve: ['M0 20L12 96L20 80L55 45L100 30'] });
[[25, 2], [39, 2], [41, 2], [55, 2], [79, 2], [81, .5], [81.5, 1.5], [95, 2]].forEach(([b, l]) => clip(22, b, l, '#c95d97', { icon: 'a', t: '#ffe8f6' }));
[25, 36.3, 41, 51.8, 76.3, 81, 91.8].forEach(b => clip(23, b, .72, '#55342a', { icon: 'a', t: '#b58a7a' }));

[1, 9, 57].forEach(b => clip(24, b, 8, '#9ea86b', { icon: 'w', wave: 'swell', label: 'DS_MT.._f#min', cls: 'mid', m: '#c0ca88' }));
[17, 65].forEach(b => run(24, b, b + 7, 1, 1, '#a3ad70', { icon: 'w', wave: 'soft' }));
[[1, 32, 'M0 50L25 12H50L75 52L100 40'], [33, 40, 'M0 40L40 18L58 12L60 55L75 15H83L100 36'], [73, 24, 'M0 36L60 16L98 12L100 45']].forEach(([b, l, p]) =>
  clip(25, b, l, '#241a70', { icon: 'a', t: '#a9a3ea', label: 'hi eq main synth', curve: [p], m: '#3a2fa0' }));

const DI = { body: '#606a4c', wc: '#ffffc4', icon: 'w', m: '#b5bf60', wave: 'burst' };
[9, 11, 13, 15, 48, 57, 59, 61, 63].forEach(b => clip(27, b, 1, '#95a05a', DI));
clip(27, 32, 1, '#6c6272', { ...DI, wc: '#dccfe0' });
[17, 65].forEach(b => { run(27, b, b + .5, .25, .25, '#95a05a', { ...DI, icon: '' }); run(27, b + .5, b + 7, .5, .5, '#95a05a', { ...DI, icon: 'f' }); });
[88, 88.5].forEach(b => clip(27, b, .5, '#95a05a', { ...DI, icon: 'f' }));
/* level of each sliced body */
laneOf[27].querySelectorAll('.clip').forEach(d => {
  const bar = parseFloat(d.style.left) * BARS / 100 + 1;
  const k = bar >= 64.9 ? bar - 65 : bar - 17;
  const lvl = k >= -.1 && k < 7 ? 50 - k * 5.6 : 42;
  const w = d.querySelector('.wave');
  w.style.height = lvl + '%';
  w.style.top = `calc(63% - ${lvl / 2}%)`;
});

clip(28, 1, 75, '#746d36', { icon: 'a', t: '#e9e4c0', label: 'hi eq vox', curve: ['M0 6H24L32 22L36 6H60L74 24L82 6L92 20L97 6'], m: '#9c9448' });
[9, 11, 13, 15, 57, 59, 61, 63].forEach(b => clip(29, b, 2, '#4c5579', { body: '#503672', wc: '#fff', icon: 'a', t: '#e6eaff', curve: ['M0 98H20C45 98 42 60 50 2H82C96 4 96 60 100 100'] }));
const TN = { body: '#432668', wc: '#fff6c0', icon: 'w', wave: 'flare' };
[40, 56, 96].forEach(b => { clip(29, b, 1, '#a59a66', TN); clip(30, b, 1, '#b5683f', { icon: 'w', t: '#ffeccc', wave: 'vocal', curve: [inn(5, 50)] }); });
clip(29, 80, .75, '#a59a66', { ...TN, icon: 'f' }); clip(29, 80.75, .25, '#c0d8c8', { ...TN, icon: '', wc: '#fff', wave: 'flat' });
clip(30, 80, .72, '#b5683f', { icon: 'f', wave: 'vocal', curve: [inn(5, 70)] });
clip(31, 1, 16.5, '#a68b80', { icon: 'a', label: 'rap delay', m: '#e0b8a8' });
clip(31, 56, 16.5, '#c66160', { icon: 'a', t: '#fff0ee', label: 'r delay 2', curve: ['M0 95C4 30 6 8 20 4C55 4 80 30 100 95'] });
clip(31, 96, 3, '#c66160', { icon: 'a', t: '#fff0ee', label: 'r d..' });
clip(32, 24, 1, '#b04c4a', { body: '#6a4c50', wc: '#ffb4b2', icon: 'w', wave: 'block' });
clip(32, 72, 1.2, '#b35cc2', { body: '#6a4c50', wc: '#ffc4ff', icon: 'w', wave: 'block' });

svg(mini.join(''), '', '0 0 98.8 33', document.getElementById('overview'));

const ruler = document.getElementById('ruler');
for (let b = 1; b < 99; b += 4) {
  const s = el('span', '', ruler);
  s.textContent = b;
  s.style.left = (b - 1) / 98 * 100 + '%';
}
```
